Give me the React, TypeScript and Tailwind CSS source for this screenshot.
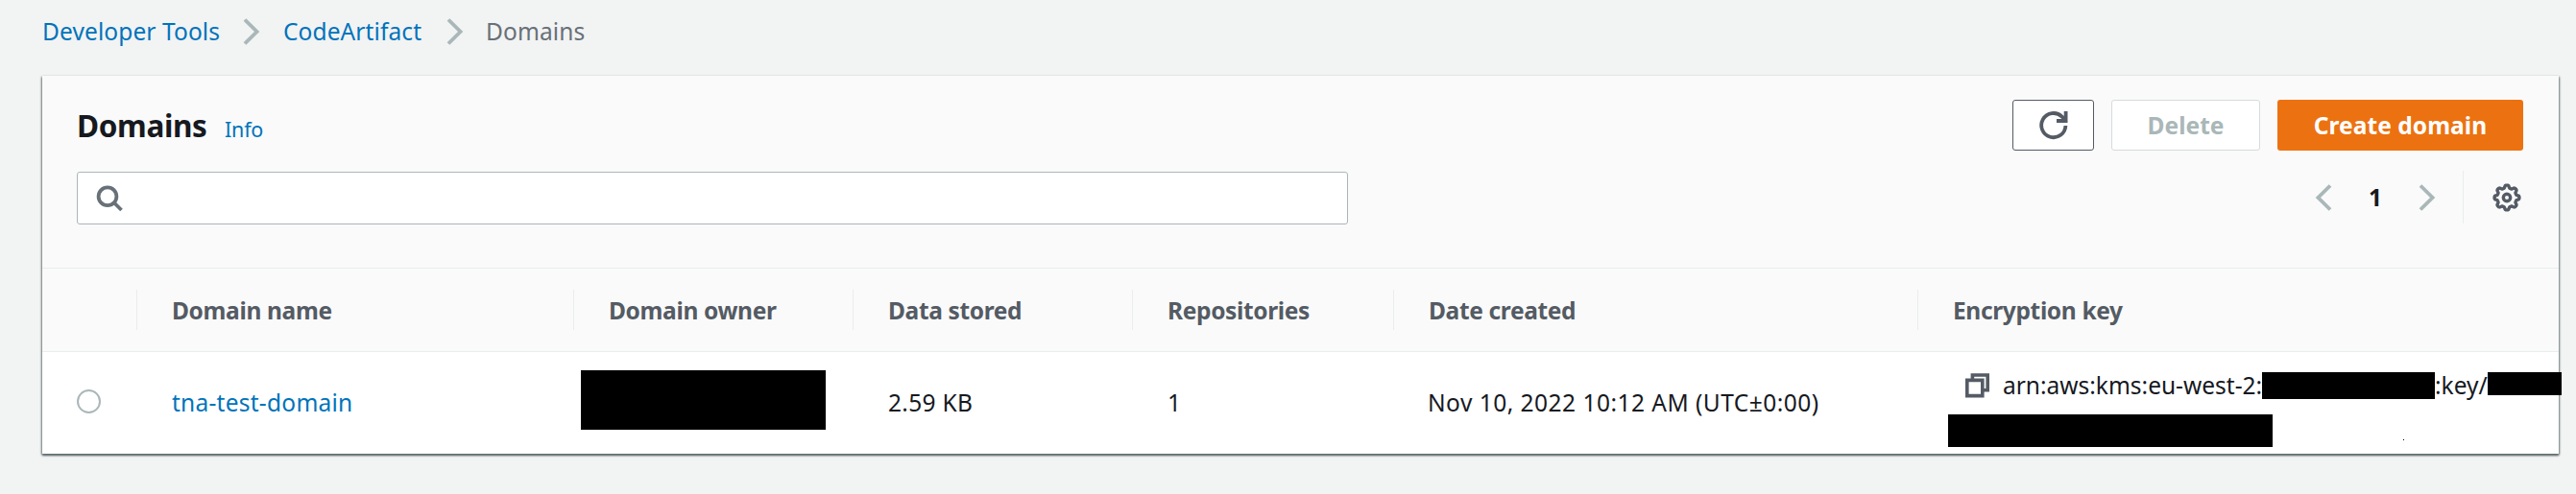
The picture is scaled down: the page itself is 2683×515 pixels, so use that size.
import React from "react";

const Chevron = ({ flip = false }: { flip?: boolean }) => (
  <svg width="18" height="28" viewBox="0 0 18 28" fill="none" stroke="#aab7b8" strokeWidth="3.8" className={flip ? "-scale-x-100 shrink-0" : "shrink-0"}>
    <path d="M2 1.5 L14.6 14 L2 26.5" />
  </svg>
);

// Eight-toothed outline: teeth are the crests of a clipped cosine around the hub.
const gearPoints = Array.from({ length: 96 }, (_, i) => {
  const a = (i / 96) * Math.PI * 2;
  const r = 11.5 + 1.4 * Math.max(-1, Math.min(1, 1.6 * Math.cos(8 * a)));
  return `${(16 + r * Math.cos(a)).toFixed(2)},${(16 + r * Math.sin(a)).toFixed(2)}`;
}).join(" ");

const columns = [
  { label: "Domain name", w: "w-[455px]" },
  { label: "Domain owner", w: "w-[291px]" },
  { label: "Data stored", w: "w-[291px]" },
  { label: "Repositories", w: "w-[272px]" },
  { label: "Date created", w: "w-[546px]" },
  { label: "Encryption key", w: "w-[660px]" },
];

export default function App() {
  return (
    <div className="h-[515px] w-[2683px] overflow-hidden bg-[#f2f3f3] font-['Noto_Sans',sans-serif] text-[24.5px] leading-[38px] text-[#16191f]">
      <nav className="flex h-[79px] items-start whitespace-nowrap pl-[44px] pt-[14px] tracking-[0.1px] text-[#0073bb]">
        <a className="w-[209px]">Developer Tools</a>
        <span className="w-[42px] pt-[5px]"><Chevron /></span>
        <a className="w-[170px]">CodeArtifact</a>
        <span className="w-[41px] pt-[5px]"><Chevron /></span>
        <span className="text-[#687078]">Domains</span>
      </nav>
      <main className="ml-[44px] h-[394px] w-[2621px] bg-white shadow-[0_2px_2px_0_#5f6b6d,1px_1px_2px_0_#8d9899,-1px_1px_2px_0_#8d9899]">
        <header className="h-[201px] border-b border-[#eaeded] bg-[#fafafa] pl-[36px] pr-[37px] pt-[25px]">
          <div className="flex h-[53px] items-center">
            <h1 className="w-[154px] text-[31.5px] font-bold tracking-[-0.35px]">Domains</h1>
            <a className="flex-1 pt-[8px] text-[21.5px] tracking-[-0.2px] text-[#0073bb]">Info</a>
            <div className="flex gap-[18px] font-bold tracking-[0.05px]">
              <button className="flex h-[53px] w-[85px] items-center justify-center rounded-[3px] border border-[#545b64] bg-white">
                <svg width="30" height="30" viewBox="0 0 30 30" fill="none" stroke="#545b64" strokeWidth="3.8">
                  <path d="M27.4 15 A12.6 12.6 0 1 1 23.6 5.6 L26.5 8.5 M27.6 0 V10 H18" />
                </svg>
              </button>
              <button className="h-[53px] w-[155px] rounded-[3px] border border-[#d5dbdb] bg-white text-[#aab7b8]">Delete</button>
              <button className="h-[53px] w-[256px] rounded-[3px] bg-[#ec7211] text-white">Create domain</button>
            </div>
          </div>
          <div className="flex justify-between pt-[22px]">
            <div className="flex h-[55px] w-[1324px] items-center rounded-[3px] border border-[#aab7b8] bg-white pl-[19px]">
              <svg width="28" height="28" viewBox="0 0 28 28" fill="none" stroke="#687078" strokeWidth="3.8">
                <circle cx="12" cy="11.8" r="9.4" />
                <path d="M18.5 18 L26.5 26" />
              </svg>
            </div>
            <div className="flex h-[53px] items-center">
              <Chevron flip />
              <span className="w-[90px] text-center font-bold">1</span>
              <Chevron />
              <i className="ml-[28px] mr-[29px] h-[55px] w-px bg-[#eaeded]" />
              <svg className="mr-[1px]" width="32" height="32" viewBox="0 0 32 32" fill="none" stroke="#545b64" strokeWidth="3.4" strokeLinejoin="round">
                <circle cx="16" cy="16" r="3.7" />
                <polygon points={gearPoints} />
              </svg>
            </div>
          </div>
        </header>
        <div className="flex h-[87px] items-center overflow-hidden border-b border-[#eaeded] bg-[#fafafa] pl-[98px] font-bold tracking-[-0.35px] text-[#545b64]">
          {columns.map((c) => (
            <div key={c.label} className={`${c.w} flex h-[42px] shrink-0 items-center whitespace-nowrap border-l border-[#eaeded] pl-[36px] pt-[2px]`}>{c.label}</div>
          ))}
        </div>
        <div className="flex h-[106px] whitespace-nowrap">
          <div className="w-[135px] shrink-0 pl-[36px] pt-[39px]"><div className="size-[25px] rounded-full border-2 border-[#aab7b8]" /></div>
          <a className="w-[426px] shrink-0 pt-[34px] tracking-[0.25px] text-[#0073bb]">tna-test-domain</a>
          <div className="mt-[19px] h-[62px] w-[255px] shrink-0 bg-black" />
          <div className="w-[356px] shrink-0 pl-[65px] pt-[34px] tracking-[0.3px]">2.59 KB</div>
          <div className="w-[271px] shrink-0 pt-[34px]">1</div>
          <div className="w-[542px] shrink-0 pt-[34px] tracking-[0.48px]">Nov 10, 2022 10:12 AM (UTC±0:00)</div>
          <div className="w-[640px] shrink-0">
            <div className="flex h-[65px] items-start pt-[16px]">
              <svg className="ml-[18px] mr-[14px] mt-[6px] shrink-0" width="25" height="26" viewBox="0 0 25 26" fill="none" stroke="#545b64" strokeWidth="3.6">
                <path d="M1.8 7.4 H17.8 V23.6 H1.8 Z M7.4 7.4 V2 H23.2 V17.8 H18" />
              </svg>
              <span className="w-[270px] shrink-0">arn:aws:kms:eu-west-2:</span>
              <i className="mt-[5px] h-[28px] w-[180px] shrink-0 bg-black" />
              <span className="w-[55px] shrink-0">:key/</span>
              <i className="mt-[5px] h-[24px] w-[77px] shrink-0 bg-black" />
            </div>
            <div className="flex items-start">
              <i className="h-[34px] w-[338px] bg-black" />
              <i className="ml-[136px] mt-[26px] size-px bg-black" />
            </div>
          </div>
        </div>
      </main>
    </div>
  );
}
